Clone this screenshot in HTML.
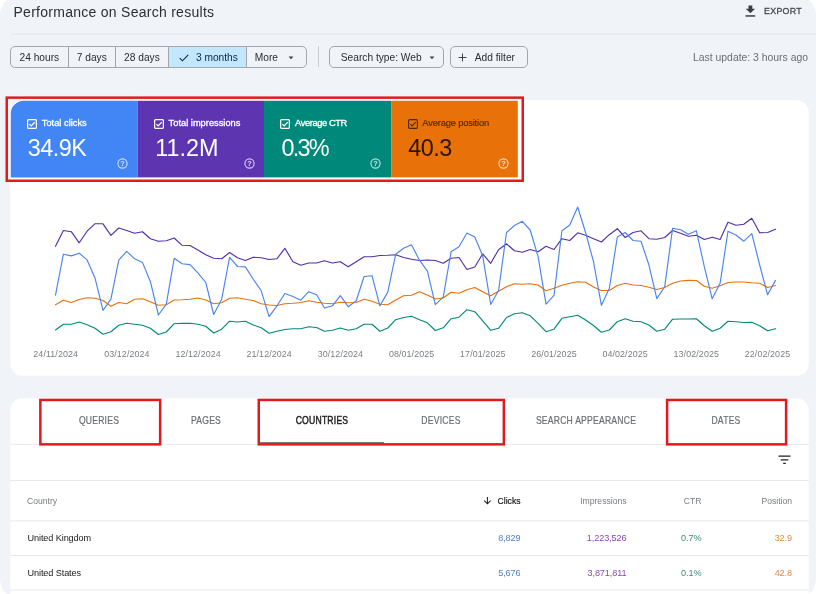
<!DOCTYPE html>
<html lang="en">
<head>
<meta charset="utf-8">
<title>Performance on Search results</title>
<style>
*{box-sizing:border-box;margin:0;padding:0}
html,body{width:816px;height:594px;overflow:hidden;background:#fff}
body{font-family:"Liberation Sans",sans-serif;position:relative;color:#202124}
.page{position:absolute;left:0;top:0;width:816px;height:594px;background:#f0f3f8;border-radius:9px / 16px;overflow:hidden;will-change:transform}
.abs{position:absolute;white-space:nowrap}
.title{left:13.5px;top:1.9px;font-size:14px;line-height:20px;color:#2d2f33;letter-spacing:0.27px}
.export{left:764.2px;top:4px;font-size:9.7px;line-height:14px;color:#44474b;letter-spacing:0.35px;-webkit-text-stroke:0.3px #44474b;transform-origin:left center;transform:scaleX(0.91)}
.hr1{left:11px;top:33.6px;width:805px;height:1px;background:#e1e5ec}
.chips{left:10px;top:45.7px;height:22.6px;border:1px solid #a3a7ad;border-radius:5px;display:flex;overflow:hidden;background:#f0f3f8}
.chip{height:20.6px;line-height:22.2px;font-size:10.2px;color:#2b2d30;text-align:center;border-right:1px solid #a3a7ad;white-space:nowrap;position:relative}
.chip:last-child{border-right:none}
.chip.sel{background:#c2e7ff;color:#0a2a45}
.vsep{left:318px;top:46px;width:1px;height:21px;background:#c9cdd3}
.chip2{top:45.7px;height:22.6px;border:1px solid #a3a7ad;border-radius:5px;font-size:10.2px;line-height:22.2px;color:#2b2d30;background:#f0f3f8}
.lastup{right:8px;top:50.5px;font-size:10.4px;line-height:14px;color:#6b6f75}
.card1{left:10.3px;top:100.4px;width:798.3px;height:275.4px;background:#fff;border-radius:12px}
.card2{left:10.3px;top:398.2px;width:798.3px;height:200px;background:#fff;border-radius:12px 12px 0 0}
.tile{top:100.7px;height:76.8px;width:127px}
.t1{left:10.8px}
.t2{left:137.6px}
.t3{left:264.1px;width:127.4px}
.t4{left:391.3px;width:126.7px}
.tile .lab{position:absolute;left:31px;top:16.6px;font-size:9.3px;line-height:12px;color:#fff;-webkit-text-stroke:0.3px #fff;letter-spacing:0px;white-space:nowrap}
.tile .val{position:absolute;left:16.9px;top:32.3px;font-size:23.4px;line-height:30px;color:#fff;white-space:nowrap;letter-spacing:-0.5px}
.t4 .lab,.t4 .val{color:#2a1500}
.t4 .lab{color:#4a2a08;-webkit-text-stroke:0.15px #4a2a08}
.tile svg.cb{position:absolute;left:16.4px;top:18.1px}
.tile svg.hp{position:absolute;left:106.4px;top:57.4px}
.redbox{border:2.5px solid #e5161c;position:absolute}
svg.chart{position:absolute;left:0;top:0}
.dl{position:absolute;top:347.5px;font-size:8.9px;line-height:12px;color:#7a7e83;transform:translateX(-50%);white-space:nowrap;letter-spacing:0.1px}
.tab{top:415.3px;font-size:10.15px;line-height:12px;color:#6a6e73;letter-spacing:0.25px;transform:translateX(-50%) scaleX(0.85);-webkit-text-stroke:0.2px #6a6e73}
.tab.act{color:#1f1f1f;-webkit-text-stroke:0.45px #1f1f1f}
.hl{left:10.3px;width:798.3px;height:1px;background:#e6e8ec}
.th{font-size:8.6px;line-height:12px;color:#777b80;top:494.5px}
.td{font-size:9.15px;line-height:12px;letter-spacing:-0.1px}
.r{transform:translateX(-100%)}
</style>
</head>
<body>
<div class="page">
  <svg class="abs" style="left:0;top:0" width="816" height="594" viewBox="0 0 816 594">
    <rect x="11" y="33.6" width="805" height="1" fill="#e1e5ec"/>
    <rect x="10.4" y="100.3" width="798.3" height="275.5" rx="12" fill="#fff"/>
    <path d="M10.8 177.4V113.8a13 13 0 0 1 13-13H137.6V177.4z" fill="#4285f4"/>
    <rect x="137.6" y="100.8" width="126.4" height="76.6" fill="#5e35b1"/>
    <rect x="264" y="100.8" width="127.2" height="76.6" fill="#00897b"/>
    <rect x="391.2" y="100.8" width="126.6" height="76.6" fill="#e8710a"/>
    <rect x="6.75" y="97.65" width="516" height="83.1" fill="none" stroke="#e21a20" stroke-width="2.5"/>
    <path d="M10.4 594V410.3a12 12 0 0 1 12-12H796.7a12 12 0 0 1 12 12V594z" fill="#fff"/>
    <g fill="#e6e8ec">
      <rect x="10.4" y="443.8" width="798.3" height="1"/>
      <rect x="10.4" y="480" width="798.3" height="1"/>
      <rect x="10.4" y="520.4" width="798.3" height="1"/>
      <rect x="10.4" y="555" width="798.3" height="1"/>
      <rect x="10.4" y="589.5" width="798.3" height="1"/>
    </g>
    <rect x="259" y="442.3" width="125" height="1.3" fill="#3c4043"/>
    <g fill="none" stroke="#e21a20" stroke-width="2.5">
      <rect x="40.35" y="399.95" width="119.8" height="44.4"/>
      <rect x="258.75" y="399.95" width="245.1" height="44.4"/>
      <rect x="667.1" y="399.95" width="119" height="44.4"/>
    </g>
  </svg>
  <div class="abs title">Performance on Search results</div>
  <svg class="abs" style="left:745px;top:5px" width="12" height="13" viewBox="0 0 12 13"><path d="M3.5 0.4h3.8v3.4h2.8L5.4 8.3 0.7 3.8h2.8z" fill="#3c4043"/><rect x="0.5" y="10.2" width="9.7" height="1.5" fill="#3c4043"/></svg>
  <div class="abs export">EXPORT</div>

  <div class="abs chips">
    <div class="chip" style="width:57.6px">24 hours</div>
    <div class="chip" style="width:47.4px">7 days</div>
    <div class="chip" style="width:52.9px">28 days</div>
    <div class="chip sel" style="width:78px;padding-left:19px"><svg style="position:absolute;left:10.5px;top:7.2px" width="10" height="8" viewBox="0 0 10 8"><path d="M0.8 4.2L3.4 6.8L9.2 0.9" fill="none" stroke="#0a2a45" stroke-width="1.1"/></svg>3 months</div>
    <div class="chip" style="width:59px;padding-right:20px">More<svg style="position:absolute;left:41px;top:9.2px" width="6" height="4" viewBox="0 0 6 4"><path d="M0.6 0.4h4.8L3 3.2z" fill="#3c4043"/></svg></div>
  </div>
  <div class="abs vsep"></div>
  <div class="abs chip2" style="left:329.3px;width:115px;padding-left:10.5px">Search type: Web<svg style="position:absolute;left:98.5px;top:9.2px" width="6" height="4" viewBox="0 0 6 4"><path d="M0.6 0.4h4.8L3 3.2z" fill="#3c4043"/></svg></div>
  <div class="abs chip2" style="left:450.3px;width:77.5px;padding-left:23.5px">Add filter<svg style="position:absolute;left:6.7px;top:6.2px" width="9" height="9" viewBox="0 0 9 9"><path d="M4.5 0.6v7.8M0.6 4.5h7.8" stroke="#3c4043" stroke-width="1" fill="none"/></svg></div>
  <div class="abs lastup">Last update: 3 hours ago</div>
  <div class="abs tile t1">
    <svg class="cb" width="10" height="10" viewBox="0 0 10 10"><rect x="0.6" y="0.6" width="8.8" height="8.8" rx="1.2" fill="none" stroke="#fff" stroke-width="1.3"/><path d="M2.4 5.1L4.2 6.9L7.7 3.2" fill="none" stroke="#fff" stroke-width="1.3"/></svg>
    <div class="lab">Total clicks</div><div class="val">34.9K</div>
    <svg class="hp" width="11" height="11" viewBox="0 0 11 11"><circle cx="5.5" cy="5.5" r="4.6" fill="none" stroke="#fff" stroke-opacity=".72" stroke-width="1.15"/><text x="5.5" y="8.2" font-size="7.4" font-family="Liberation Sans, sans-serif" font-weight="bold" text-anchor="middle" fill="#fff" fill-opacity=".8">?</text></svg>
  </div>
  <div class="abs tile t2">
    <svg class="cb" width="10" height="10" viewBox="0 0 10 10"><rect x="0.6" y="0.6" width="8.8" height="8.8" rx="1.2" fill="none" stroke="#fff" stroke-width="1.3"/><path d="M2.4 5.1L4.2 6.9L7.7 3.2" fill="none" stroke="#fff" stroke-width="1.3"/></svg>
    <div class="lab">Total impressions</div><div class="val" style="letter-spacing:0;left:17.6px">11.2M</div>
    <svg class="hp" width="11" height="11" viewBox="0 0 11 11"><circle cx="5.5" cy="5.5" r="4.6" fill="none" stroke="#fff" stroke-opacity=".72" stroke-width="1.15"/><text x="5.5" y="8.2" font-size="7.4" font-family="Liberation Sans, sans-serif" font-weight="bold" text-anchor="middle" fill="#fff" fill-opacity=".8">?</text></svg>
  </div>
  <div class="abs tile t3">
    <svg class="cb" width="10" height="10" viewBox="0 0 10 10"><rect x="0.6" y="0.6" width="8.8" height="8.8" rx="1.2" fill="none" stroke="#fff" stroke-width="1.3"/><path d="M2.4 5.1L4.2 6.9L7.7 3.2" fill="none" stroke="#fff" stroke-width="1.3"/></svg>
    <div class="lab" style="letter-spacing:-0.4px">Average CTR</div><div class="val" style="letter-spacing:-1.8px;left:17.5px">0.3%</div>
    <svg class="hp" width="11" height="11" viewBox="0 0 11 11"><circle cx="5.5" cy="5.5" r="4.6" fill="none" stroke="#fff" stroke-opacity=".72" stroke-width="1.15"/><text x="5.5" y="8.2" font-size="7.4" font-family="Liberation Sans, sans-serif" font-weight="bold" text-anchor="middle" fill="#fff" fill-opacity=".8">?</text></svg>
  </div>
  <div class="abs tile t4">
    <svg class="cb" width="10" height="10" viewBox="0 0 10 10"><rect x="0.6" y="0.6" width="8.8" height="8.8" rx="1.2" fill="none" stroke="#4a2a08" stroke-width="1.1"/><path d="M2.4 5.1L4.2 6.9L7.7 3.2" fill="none" stroke="#4a2a08" stroke-width="1.1"/></svg>
    <div class="lab" style="letter-spacing:-0.15px">Average position</div><div class="val">40.3</div>
    <svg class="hp" width="11" height="11" viewBox="0 0 11 11"><circle cx="5.5" cy="5.5" r="4.6" fill="none" stroke="#fff" stroke-opacity=".72" stroke-width="1.15"/><text x="5.5" y="8.2" font-size="7.4" font-family="Liberation Sans, sans-serif" font-weight="bold" text-anchor="middle" fill="#fff" fill-opacity=".8">?</text></svg>
  </div>

  <svg class="chart" width="816" height="594" viewBox="0 0 816 594">
<g fill="none" stroke-width="1.15" stroke-linejoin="round" stroke-linecap="round">
<polyline stroke="#e8710a" points="55.5,304.7 63.4,300.3 71.3,302.5 79.2,299.5 87.1,297.8 95.1,298.3 103.0,300.5 110.9,306.3 118.8,302.5 126.7,303.8 134.6,299.2 142.5,298.7 150.4,301.7 158.4,305.3 166.3,304.7 174.2,300.0 182.1,299.8 190.0,299.2 197.9,298.0 205.8,300.0 213.7,303.7 221.7,302.8 229.6,298.3 237.5,297.8 245.4,299.2 253.3,300.5 261.2,303.7 269.1,305.0 277.0,305.5 284.9,303.8 292.9,303.3 300.8,302.5 308.7,300.7 316.6,302.2 324.5,303.3 332.4,303.7 340.3,302.2 348.2,302.8 356.2,302.5 364.1,299.2 372.0,301.3 379.9,304.2 387.8,304.7 395.7,300.0 403.6,295.8 411.5,295.3 419.5,291.7 427.4,295.0 435.3,299.0 443.2,298.0 451.1,292.2 459.0,293.3 466.9,289.7 474.8,287.5 482.7,291.7 490.7,295.8 498.6,291.3 506.5,286.7 514.4,283.7 522.3,284.2 530.2,283.7 538.1,285.0 546.0,290.8 554.0,288.3 561.9,285.2 569.8,283.3 577.7,281.7 585.6,282.2 593.5,287.0 601.4,290.5 609.3,290.5 617.3,285.5 625.2,283.3 633.1,285.0 641.0,285.5 648.9,287.2 656.8,289.5 664.7,287.5 672.6,283.3 680.5,281.0 688.5,280.4 696.4,280.5 704.3,286.2 712.2,288.3 720.1,285.8 728.0,282.5 735.9,282.0 743.8,282.0 751.8,282.8 759.7,283.3 767.6,287.5 775.5,285.5"/>
<polyline stroke="#00897b" points="55.5,330.0 63.4,324.2 71.3,324.2 79.2,322.0 87.1,324.7 95.1,328.3 103.0,334.2 110.9,331.7 118.8,325.3 126.7,323.3 134.6,324.2 142.5,325.3 150.4,328.3 158.4,334.5 166.3,332.0 174.2,323.7 182.1,323.3 190.0,323.3 197.9,324.2 205.8,326.2 213.7,333.0 221.7,329.2 229.6,321.2 237.5,322.0 245.4,321.3 253.3,325.0 261.2,327.8 269.1,333.3 277.0,331.2 284.9,329.5 292.9,328.7 300.8,328.8 308.7,326.7 316.6,327.5 324.5,331.2 332.4,330.3 340.3,328.0 348.2,330.3 356.2,328.8 364.1,324.2 372.0,324.2 379.9,331.3 387.8,328.0 395.7,319.7 403.6,317.5 411.5,316.3 419.5,319.7 427.4,322.8 435.3,330.5 443.2,327.8 451.1,318.7 459.0,317.2 466.9,309.7 474.8,311.7 482.7,320.8 490.7,330.3 498.6,328.3 506.5,317.5 514.4,313.8 522.3,312.8 530.2,315.8 538.1,323.3 546.0,331.7 554.0,329.2 561.9,318.3 569.8,316.7 577.7,315.3 585.6,320.0 593.5,325.5 601.4,332.2 609.3,330.0 617.3,321.7 625.2,318.8 633.1,321.3 641.0,321.7 648.9,325.0 656.8,331.2 664.7,329.2 672.6,319.2 680.5,319.0 688.5,319.0 696.4,318.8 704.3,325.8 712.2,331.3 720.1,328.3 728.0,321.3 735.9,321.7 743.8,322.5 751.8,322.2 759.7,325.8 767.6,330.8 775.5,328.7"/>
<polyline stroke="#5230a8" points="55.5,246.3 63.4,230.5 71.3,231.7 79.2,242.8 87.1,231.2 95.1,223.7 103.0,223.8 110.9,235.3 118.8,228.0 126.7,230.5 134.6,233.3 142.5,231.7 150.4,238.8 158.4,241.2 166.3,240.8 174.2,238.0 182.1,245.3 190.0,245.5 197.9,250.0 205.8,254.7 213.7,258.3 221.7,258.8 229.6,252.5 237.5,257.8 245.4,260.5 253.3,257.2 261.2,257.8 269.1,259.5 277.0,258.7 284.9,248.3 292.9,261.7 300.8,265.3 308.7,263.0 316.6,263.0 324.5,260.8 332.4,263.0 340.3,261.7 348.2,266.7 356.2,261.7 364.1,256.7 372.0,256.7 379.9,255.5 387.8,255.3 395.7,254.7 403.6,257.5 411.5,259.2 419.5,260.5 427.4,260.0 435.3,260.5 443.2,263.3 451.1,258.3 459.0,257.5 466.9,269.5 474.8,267.0 482.7,253.8 490.7,263.3 498.6,249.7 506.5,243.8 514.4,250.8 522.3,252.2 530.2,249.5 538.1,251.7 546.0,246.3 554.0,249.5 561.9,238.7 569.8,240.5 577.7,232.8 585.6,235.3 593.5,238.7 601.4,242.0 609.3,234.7 617.3,228.7 625.2,237.5 633.1,232.5 641.0,230.8 648.9,238.7 656.8,239.2 664.7,237.5 672.6,230.5 680.5,233.3 688.5,236.3 696.4,235.3 704.3,239.5 712.2,237.2 720.1,239.5 728.0,222.2 735.9,225.3 743.8,224.2 751.8,218.3 759.7,232.8 767.6,232.5 775.5,229.2"/>
<polyline stroke="#4a84ee" points="55.5,295.2 63.4,254.2 71.3,255.9 79.2,253.2 87.1,259.9 95.1,278.3 103.0,310.3 110.9,299.2 118.8,260.2 126.7,251.3 134.6,258.8 142.5,262.4 150.4,281.7 158.4,315.0 166.3,304.2 174.2,258.3 182.1,263.8 190.0,264.6 197.9,272.9 205.8,282.5 213.7,314.5 221.7,299.2 229.6,257.4 237.5,266.5 245.4,266.9 253.3,279.2 261.2,290.8 269.1,316.7 277.0,305.8 284.9,293.5 292.9,296.5 300.8,300.2 308.7,291.7 316.6,294.8 324.5,308.0 332.4,305.8 340.3,295.6 348.2,306.7 356.2,300.8 364.1,276.5 372.0,275.7 379.9,305.8 387.8,292.1 395.7,254.2 403.6,248.3 411.5,244.8 419.5,260.2 427.4,271.2 435.3,304.7 443.2,297.2 451.1,251.7 459.0,246.8 466.9,233.0 474.8,237.0 482.7,255.8 490.7,304.5 498.6,290.5 506.5,232.5 514.4,225.5 522.3,221.3 530.2,230.0 538.1,256.7 546.0,304.2 554.0,295.4 561.9,230.8 569.8,225.0 577.7,207.0 585.6,232.5 593.5,261.7 601.4,305.3 609.3,288.5 617.3,237.0 625.2,232.5 633.1,240.5 641.0,241.2 648.9,264.8 656.8,298.6 664.7,286.7 672.6,228.3 680.5,229.7 688.5,234.2 696.4,230.8 704.3,266.7 712.2,298.8 720.1,283.3 728.0,231.2 735.9,235.0 743.8,241.2 751.8,233.7 759.7,265.0 767.6,294.8 775.5,280.4"/>
</g></svg>
  <span class="dl" style="left:55.7px">24/11/2024</span><span class="dl" style="left:126.9px">03/12/2024</span><span class="dl" style="left:198.1px">12/12/2024</span><span class="dl" style="left:269.2px">21/12/2024</span><span class="dl" style="left:340.4px">30/12/2024</span><span class="dl" style="left:411.6px">08/01/2025</span><span class="dl" style="left:482.8px">17/01/2025</span><span class="dl" style="left:554.0px">26/01/2025</span><span class="dl" style="left:625.1px">04/02/2025</span><span class="dl" style="left:696.3px">13/02/2025</span><span class="dl" style="left:767.5px">22/02/2025</span>
  <div class="abs tab" style="left:98.5px">QUERIES</div>
  <div class="abs tab" style="left:206px">PAGES</div>
  <div class="abs tab act" style="left:321.5px">COUNTRIES</div>
  <div class="abs tab" style="left:441px">DEVICES</div>
  <div class="abs tab" style="left:586px">SEARCH APPEARANCE</div>
  <div class="abs tab" style="left:726px">DATES</div>

  <svg class="abs" style="left:778.1px;top:455.4px" width="13" height="10" viewBox="0 0 13 10"><path d="M0.5 1.2h12M2.7 4.8h7.6M5.2 8.4h2.6" stroke="#202124" stroke-width="1.3" fill="none"/></svg>
  <div class="abs th" style="left:27px">Country</div>
  <div class="abs th r" style="left:520.5px;color:#202124;-webkit-text-stroke:0.2px #202124">Clicks</div>
  <svg class="abs" style="left:483px;top:496px" width="9" height="9" viewBox="0 0 9 9"><path d="M4.4 1v6.6M1.2 4.6l3.2 3.2 3.2-3.2" fill="none" stroke="#202124" stroke-width="1.05"/></svg>
  <div class="abs th r" style="left:626.5px">Impressions</div>
  <div class="abs th r" style="left:701.5px">CTR</div>
  <div class="abs th r" style="left:792px">Position</div>

  <div class="abs td" style="left:27.5px;top:532px;color:#202124">United Kingdom</div>
  <div class="abs td r" style="left:520.5px;top:532px;color:#4f7ec8">8,829</div>
  <div class="abs td r" style="left:626.5px;top:532px;color:#8a47b0">1,223,526</div>
  <div class="abs td r" style="left:701.5px;top:532px;color:#3a8a7a">0.7%</div>
  <div class="abs td r" style="left:792px;top:532px;color:#d98a4a">32.9</div>

  <div class="abs td" style="left:27.5px;top:566.5px;color:#202124">United States</div>
  <div class="abs td r" style="left:520.5px;top:566.5px;color:#4f7ec8">5,676</div>
  <div class="abs td r" style="left:626.5px;top:566.5px;color:#8a47b0">3,871,811</div>
  <div class="abs td r" style="left:701.5px;top:566.5px;color:#3a8a7a">0.1%</div>
  <div class="abs td r" style="left:792px;top:566.5px;color:#d98a4a">42.8</div>
</div>
</body>
</html>
